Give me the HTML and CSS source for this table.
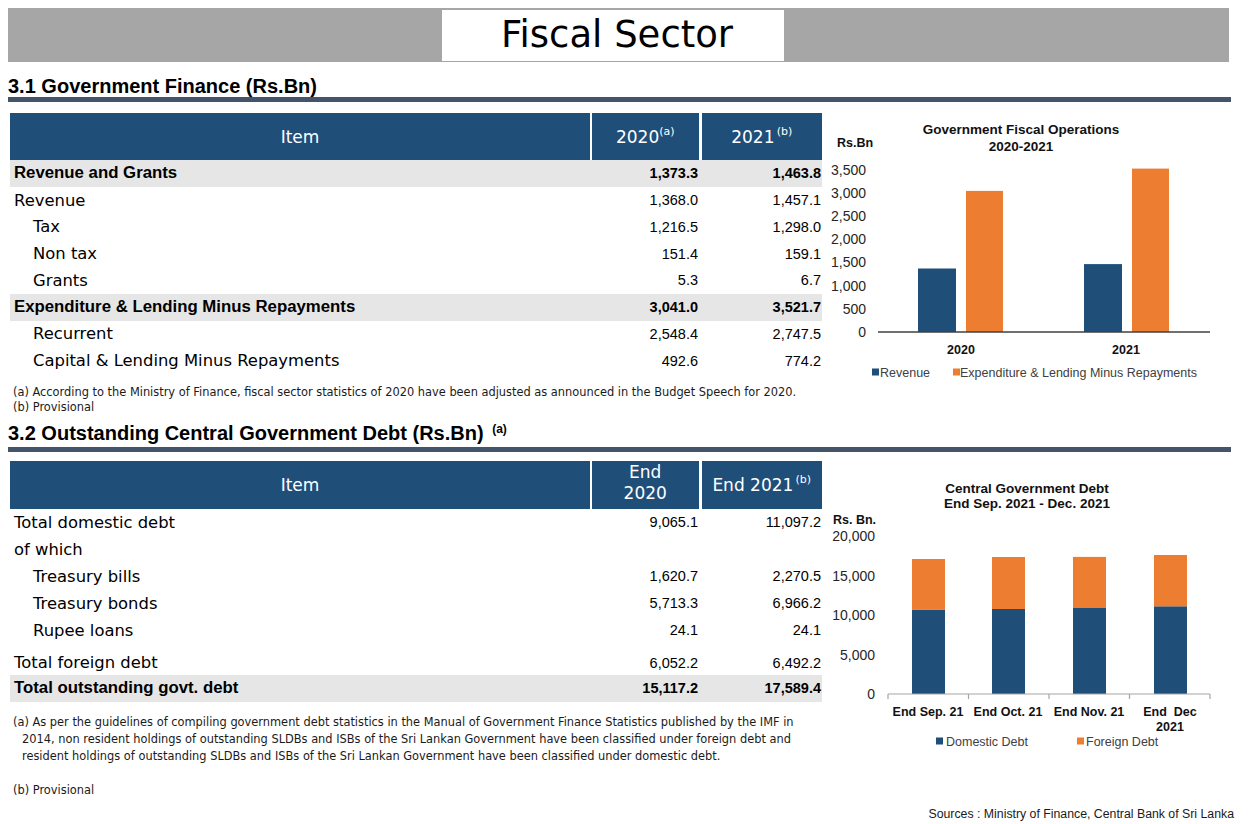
FILE: index.html
```html
<!DOCTYPE html>
<html lang="en">
<head>
<meta charset="utf-8">
<title>Fiscal Sector</title>
<link rel="stylesheet" href="styles.css">
</head>
<body>
<div class="page">
  <header class="banner"><div class="banner-title">Fiscal Sector</div></header>

  <h2 class="sec-title sec-1">3.1 Government Finance (Rs.Bn)</h2>
  <div class="rule"></div>

  <div class="sec-row row-1">
    <div class="left">
      <table class="data">
        <colgroup><col class="c-item"><col class="c-y1"><col class="c-y2"></colgroup>
        <thead>
          <tr class="hd hd-1"><th>Item</th><th class="sep">2020<sup>(a)</sup></th><th class="sep sep3">2021<sup>&#8201;(b)</sup></th></tr>
        </thead>
        <tbody>
          <tr class="r1 shade bold"><td>Revenue and Grants</td><td class="n">1,373.3</td><td class="n n3">1,463.8</td></tr>
          <tr class="r1"><td>Revenue</td><td class="n">1,368.0</td><td class="n n3">1,457.1</td></tr>
          <tr class="r1"><td class="ind">Tax</td><td class="n">1,216.5</td><td class="n n3">1,298.0</td></tr>
          <tr class="r1"><td class="ind">Non tax</td><td class="n">151.4</td><td class="n n3">159.1</td></tr>
          <tr class="r1"><td class="ind">Grants</td><td class="n">5.3</td><td class="n n3">6.7</td></tr>
          <tr class="r1 shade bold"><td>Expenditure &amp; Lending Minus Repayments</td><td class="n">3,041.0</td><td class="n n3">3,521.7</td></tr>
          <tr class="r1"><td class="ind">Recurrent</td><td class="n">2,548.4</td><td class="n n3">2,747.5</td></tr>
          <tr class="r1"><td class="ind">Capital &amp; Lending Minus Repayments</td><td class="n">492.6</td><td class="n n3">774.2</td></tr>
        </tbody>
      </table>
      <div class="notes notes-1">
        <p>(a) According to the Ministry of Finance, fiscal sector statistics of 2020 have been adjusted as announced in the Budget Speech for 2020.</p>
        <p>(b) Provisional</p>
      </div>
    </div>

    <div class="chart">
      <svg class="chart-svg" width="414" height="280" viewBox="0 0 414 280">
        <text class="c-title" x="195" y="21" text-anchor="middle">Government Fiscal Operations</text>
        <text class="c-title" x="195" y="38" text-anchor="middle">2020-2021</text>
        <text class="c-unit" x="11" y="34">Rs.Bn</text>
        <g class="c-axis-lbl" text-anchor="end">
          <text x="40" y="61.6">3,500</text>
          <text x="40" y="84.8">3,000</text>
          <text x="40" y="108">2,500</text>
          <text x="40" y="131.2">2,000</text>
          <text x="40" y="154.4">1,500</text>
          <text x="40" y="177.6">1,000</text>
          <text x="40" y="200.8">500</text>
          <text x="40" y="224">0</text>
        </g>
        <rect class="b-blue" x="92" y="155.5" width="38" height="63.5"/>
        <rect class="b-orange" x="140" y="77.9" width="37" height="141.1"/>
        <rect class="b-blue" x="258" y="151.1" width="38" height="67.9"/>
        <rect class="b-orange" x="306" y="55.6" width="37" height="163.4"/>
        <line x1="52" y1="219" x2="384" y2="219" class="axis-dark"/>
        <text class="c-cat" x="135" y="241" text-anchor="middle">2020</text>
        <text class="c-cat" x="300" y="241" text-anchor="middle">2021</text>
        <rect class="b-blue" x="46" y="255.5" width="7" height="7"/>
        <text class="c-leg" x="54" y="263.5">Revenue</text>
        <rect class="b-orange" x="127" y="255.5" width="7" height="7"/>
        <text class="c-leg" x="134" y="263.5">Expenditure &amp; Lending Minus Repayments</text>
      </svg>
    </div>
  </div>

  <h2 class="sec-title sec-2">3.2 Outstanding Central Government Debt (Rs.Bn) <sup>(a)</sup></h2>
  <div class="rule rule-2"></div>

  <div class="sec-row row-2">
    <div class="left">
      <table class="data">
        <colgroup><col class="c-item"><col class="c-y1"><col class="c-y2"></colgroup>
        <thead>
          <tr class="hd hd-2"><th>Item</th><th class="sep two">End<br>2020</th><th class="sep sep3">End 2021<sup>&#8201;(b)</sup></th></tr>
        </thead>
        <tbody>
          <tr class="r2"><td>Total domestic debt</td><td class="n">9,065.1</td><td class="n n3">11,097.2</td></tr>
          <tr class="r2"><td>of which</td><td class="n"></td><td class="n n3"></td></tr>
          <tr class="r2"><td class="ind">Treasury bills</td><td class="n">1,620.7</td><td class="n n3">2,270.5</td></tr>
          <tr class="r2"><td class="ind">Treasury bonds</td><td class="n">5,713.3</td><td class="n n3">6,966.2</td></tr>
          <tr class="r2"><td class="ind">Rupee loans</td><td class="n">24.1</td><td class="n n3">24.1</td></tr>
          <tr class="r2 tall"><td>Total foreign debt</td><td class="n">6,052.2</td><td class="n n3">6,492.2</td></tr>
          <tr class="r2 shade bold"><td>Total outstanding govt. debt</td><td class="n">15,117.2</td><td class="n n3">17,589.4</td></tr>
        </tbody>
      </table>
      <div class="notes notes-2">
        <p class="hang">(a) As per the guidelines of compiling government debt statistics in the Manual of Government Finance Statistics published by the IMF in<br>2014, non resident holdings of outstanding SLDBs and ISBs of the Sri Lankan Government have been classified under foreign debt and<br>resident holdings of outstanding SLDBs and ISBs of the Sri Lankan Government have been classified under domestic debt.</p>
        <p class="prov">(b) Provisional</p>
      </div>
    </div>

    <div class="chart">
      <svg class="chart-svg" width="414" height="300" viewBox="0 0 414 300">
        <text class="c-title" x="201" y="32" text-anchor="middle">Central Government Debt</text>
        <text class="c-title" x="201" y="47" text-anchor="middle">End Sep. 2021 - Dec. 2021</text>
        <text class="c-unit" x="7" y="63">Rs. Bn.</text>
        <g class="c-axis-lbl" text-anchor="end">
          <text x="49" y="80">20,000</text>
          <text x="49" y="119.5">15,000</text>
          <text x="49" y="159">10,000</text>
          <text x="49" y="198.5">5,000</text>
          <text x="49" y="238">0</text>
        </g>
        <rect class="b-blue" x="86" y="148.9" width="33" height="84.1"/>
        <rect class="b-orange" x="86" y="98" width="33" height="50.9"/>
        <rect class="b-blue" x="166" y="148" width="33" height="85"/>
        <rect class="b-orange" x="166" y="96" width="33" height="52"/>
        <rect class="b-blue" x="247" y="147" width="33" height="86"/>
        <rect class="b-orange" x="247" y="95.9" width="33" height="51.1"/>
        <rect class="b-blue" x="328" y="145.3" width="33" height="87.7"/>
        <rect class="b-orange" x="328" y="94" width="33" height="51.3"/>
        <g class="axis-light">
          <line x1="62" y1="233" x2="384" y2="233"/>
          <line x1="62" y1="233" x2="62" y2="238"/>
          <line x1="142.5" y1="233" x2="142.5" y2="238"/>
          <line x1="223" y1="233" x2="223" y2="238"/>
          <line x1="303.5" y1="233" x2="303.5" y2="238"/>
          <line x1="384" y1="233" x2="384" y2="238"/>
        </g>
        <g class="c-cat" text-anchor="middle">
          <text x="102" y="255">End Sep. 21</text>
          <text x="182" y="255">End Oct. 21</text>
          <text x="263" y="255">End Nov. 21</text>
          <text x="344" y="255">End&#160; Dec</text>
          <text x="344" y="270">2021</text>
        </g>
        <rect class="b-blue" x="110" y="276.5" width="7" height="7"/>
        <text class="c-leg" x="120" y="284.5">Domestic Debt</text>
        <rect class="b-orange" x="251" y="276.5" width="7" height="7"/>
        <text class="c-leg" x="260" y="284.5">Foreign Debt</text>
      </svg>
    </div>
  </div>

  <div class="sources">Sources : Ministry of Finance, Central Bank of Sri Lanka</div>
</div>
</body>
</html>
```

FILE: styles.css
```css
* { box-sizing: border-box; }

body {
  margin: 0;
  background: #ffffff;
  color: #000000;
  font-family: "DejaVu Sans", "Liberation Sans", sans-serif;
}

.page {
  width: 1248px;
  padding: 8px 0 0 8px;
}

/* Banner */
.banner {
  width: 1221px;
  height: 54px;
  background: #a6a6a6;
  display: flex;
  justify-content: center;
  padding: 2px 11px 1px 0;
}

.banner-title {
  width: 342px;
  background: #ffffff;
  display: flex;
  align-items: center;
  justify-content: center;
  font-family: "DejaVu Sans", sans-serif;
  font-size: 37px;
  color: #000;
  padding: 0 0 2px 8px;
}

/* Section headings */
.sec-title {
  margin: 0;
  font-family: "Liberation Sans", Arial, sans-serif;
  font-weight: bold;
  font-size: 20px;
  line-height: 20px;
  color: #000;
}

.sec-1 { margin-top: 14px; }
.sec-2 { margin-top: 8px; }

.sec-title sup {
  font-size: 12px;
  vertical-align: 7px;
  line-height: 0;
  margin-left: 3px;
}

.rule {
  width: 1223px;
  height: 5px;
  background: #44546a;
  margin-top: 1px;
}

.rule-2 { margin-top: 4px; }

.sec-row {
  display: flex;
  align-items: flex-start;
}

.row-1 { margin-top: 11px; }
.row-2 { margin-top: 9px; }

.left {
  width: 814px;
  padding-left: 2px;
}

.chart {
  width: 414px;
  margin-left: 4px;
}

.chart-svg { display: block; }

/* Tables */
.data {
  width: 812px;
  border-collapse: collapse;
  table-layout: fixed;
}

.c-item { width: 581px; }
.c-y1 { width: 109px; }
.c-y2 { width: 122px; }

.hd th {
  background: #1f4e79;
  color: #ffffff;
  font-weight: normal;
  font-size: 17px;
  text-align: center;
  padding: 0;
}

.hd-1 th { height: 47px; }
.hd-2 th { height: 48px; }

.hd th.sep { border-left: 2px solid #ffffff; }
.hd th.sep3 { border-left-width: 3px; }
.hd th.two { line-height: 21px; padding-bottom: 3px; }

.hd sup {
  font-size: 11px;
  vertical-align: 8px;
  line-height: 0;
}

.data td {
  padding: 0 0 0 4px;
  font-size: 16.4px;
  white-space: nowrap;
  vertical-align: middle;
}

.r1 td { height: 26.75px; }
.r2 td { height: 27px; }
.r2.tall td {
  height: 31px;
  vertical-align: bottom;
  padding-bottom: 3px;
}

.data td.ind { padding-left: 23px; }

.data td.n {
  text-align: right;
  font-family: "Liberation Sans", Arial, sans-serif;
  font-size: 14.5px;
  padding: 0 2px 0 0;
}

.data td.n3 { padding-right: 1px; }
.r2.tall td.n { padding-bottom: 4px; }

.shade td { background: #e7e6e6; }

.bold td {
  font-family: "Liberation Sans", Arial, sans-serif;
  font-weight: bold;
  font-size: 16.8px;
}

.bold td.n { font-size: 14.5px; }

/* Notes */
.notes {
  font-family: "DejaVu Sans", sans-serif;
  font-size: 11.4px;
  color: #1a1a1a;
  padding-left: 3px;
}

.notes p { margin: 0; white-space: nowrap; }

.notes-1 { margin-top: 10.5px; line-height: 15px; }

.notes-2 { margin-top: 12.5px; }

.notes-2 .hang {
  line-height: 17px;
  padding-left: 9px;
  text-indent: -9px;
}

.notes-2 .prov {
  margin-top: 18px;
  line-height: 15px;
}

.sources {
  width: 1226px;
  margin-top: 7.5px;
  text-align: right;
  font-family: "Liberation Sans", Arial, sans-serif;
  font-size: 12.3px;
  line-height: 16px;
  color: #1a1a1a;
}

/* Chart styling */
.c-title {
  font-family: "Liberation Sans", Arial, sans-serif;
  font-weight: bold;
  font-size: 13.5px;
  fill: #111;
}

.c-unit {
  font-family: "Liberation Sans", Arial, sans-serif;
  font-weight: bold;
  font-size: 12.5px;
  fill: #111;
}

.c-axis-lbl text {
  font-family: "Liberation Sans", Arial, sans-serif;
  font-size: 14px;
  fill: #262626;
}

.c-cat, .c-cat text {
  font-family: "Liberation Sans", Arial, sans-serif;
  font-weight: bold;
  font-size: 12.5px;
  fill: #111;
}

.c-leg {
  font-family: "Liberation Sans", Arial, sans-serif;
  font-size: 12.5px;
  fill: #404040;
}

.b-blue { fill: #1f4e79; }
.b-orange { fill: #ed7d31; }

.axis-dark { stroke: #404040; stroke-width: 1.4; }
.axis-light line { stroke: #a6a6a6; stroke-width: 1.2; }
```
